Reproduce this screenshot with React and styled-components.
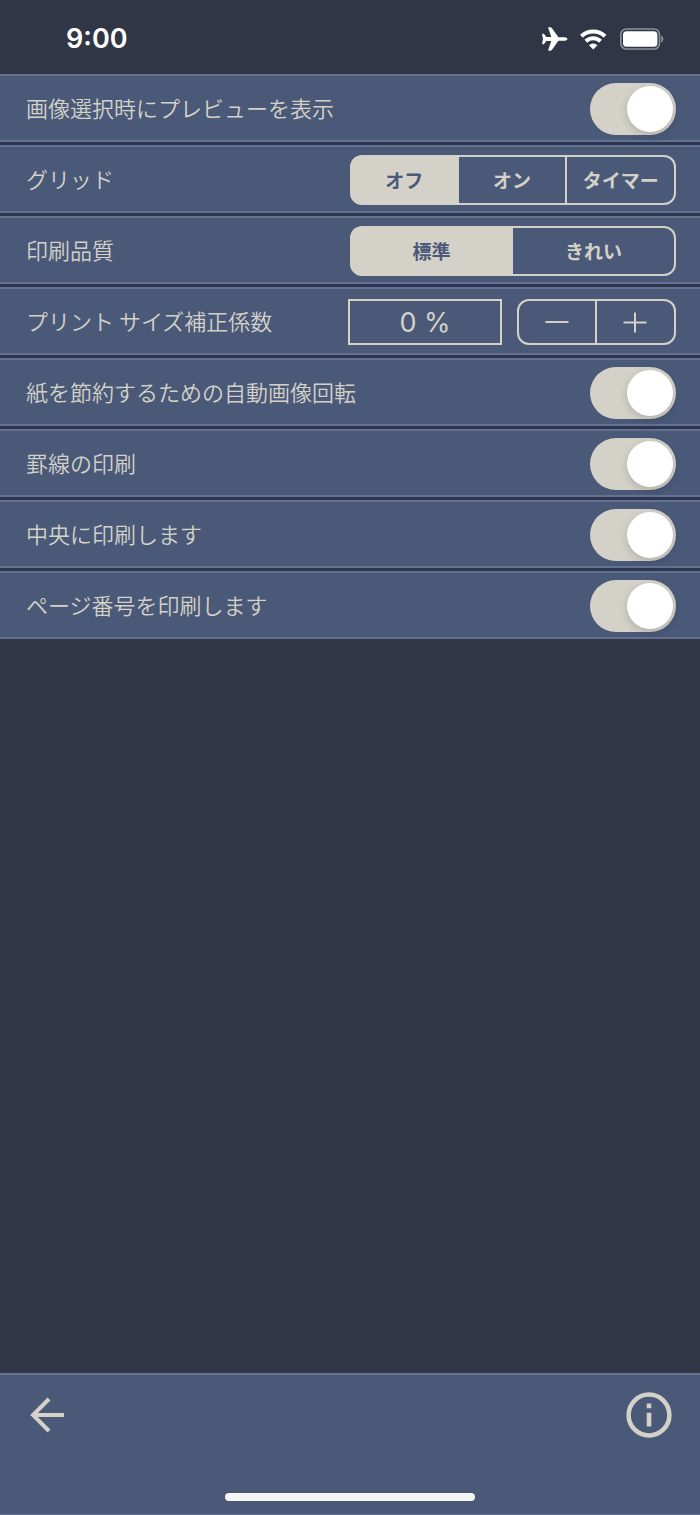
import React, { Component } from "react";
import styled, { createGlobalStyle } from "styled-components";

const NAVY = "#303645";
const PANEL = "#4a5978";
const LINE = "#64718f";
const SAND = "#d3d1c8";

const GlobalStyle = createGlobalStyle`
  * {
    box-sizing: border-box;
  }
  body {
    margin: 0;
    background: ${NAVY};
    color: ${SAND};
    font-family: "Noto Sans CJK JP", sans-serif;
  }
  button,
  input {
    color: inherit;
    font: inherit;
  }
`;

const Screen = styled.div`
  display: flex;
  flex-direction: column;
  min-height: 100vh;
`;

const StatusBar = styled.header`
  align-items: center;
  color: #fff;
  display: flex;
  height: 74px;
  justify-content: space-between;
  padding: 3px 36px 0 66px;
`;

const Clock = styled.time`
  font-family: Inter, sans-serif;
  font-size: 27px;
  font-weight: 600;
  line-height: 32px;
`;

const StatusIcons = styled.div`
  align-items: center;
  display: flex;
  gap: 12px;
`;

const Settings = styled.main`
  background: #2b3450;
  display: grid;
  gap: 3px;
`;

const Row = styled.div`
  align-items: center;
  background: ${PANEL};
  border-bottom: 2px solid ${LINE};
  border-top: 2px solid ${LINE};
  display: flex;
  height: 68px;
  justify-content: space-between;
  padding: 2px 24px 0 26px;
`;

const RowTitle = styled.label`
  font-size: 22px;
  font-weight: 350;
  line-height: 32px;
  padding-bottom: 4px;
`;

const Switch = styled.input`
  appearance: none;
  background: ${SAND};
  border-radius: 26px;
  display: flex;
  flex: none;
  height: 52px;
  justify-content: flex-start;
  margin: 0;
  opacity: ${props => (props.checked ? 1 : 0.6)};
  padding: 3px;
  width: 86px;
  &::before {
    background: #fff;
    border-radius: 50%;
    box-shadow: 0 3px 8px rgba(0, 0, 0, 0.16);
    content: "";
    height: 46px;
    margin-left: ${props => (props.checked ? "34px" : "0")};
    width: 46px;
  }
`;

const Segments = styled.div`
  display: grid;
  flex: none;
  grid-auto-columns: 1fr;
  grid-auto-flow: column;
  height: 50px;
  width: 326px;
`;

const Segment = styled.label`
  align-items: center;
  background: ${props => (props.$active ? SAND : "transparent")};
  border: 2px solid ${SAND};
  color: ${props => (props.$active ? PANEL : SAND)};
  display: flex;
  font-size: 19px;
  font-weight: 700;
  justify-content: center;
  line-height: 28px;
  &:first-child {
    border-radius: 12px 0 0 12px;
  }
  &:last-child {
    border-radius: 0 12px 12px 0;
  }
  & + & {
    border-left: 0;
  }
  &:has(:focus-visible) {
    text-decoration: underline;
  }
`;

const Radio = styled.input`
  appearance: none;
  height: 0;
  margin: 0;
  width: 0;
`;

const Adjust = styled.div`
  display: flex;
  gap: 15px;
`;

const Amount = styled.input`
  background: transparent;
  border: 2px solid ${SAND};
  font-family: Inter, sans-serif;
  font-size: 27px;
  font-weight: 400;
  height: 46px;
  padding: 0;
  text-align: center;
  width: 154px;
`;

const Stepper = styled.div`
  display: grid;
  grid-template-columns: 1fr 1fr;
  height: 46px;
  width: 159px;
`;

const StepButton = styled.button`
  align-items: center;
  background: transparent;
  border: 2px solid ${SAND};
  border-radius: 12px 0 0 12px;
  display: flex;
  justify-content: center;
  padding: 0;
  & + & {
    border-left: 0;
    border-radius: 0 12px 12px 0;
  }
`;

const Footer = styled.footer`
  align-items: center;
  background: ${PANEL};
  border-bottom: 1px solid ${LINE};
  border-top: 2px solid ${LINE};
  display: flex;
  flex-direction: column;
  height: 142px;
  justify-content: space-between;
  margin-top: auto;
  padding: 13px 24px;
`;

const Tools = styled.nav`
  display: flex;
  justify-content: space-between;
  width: 100%;
`;

const ToolButton = styled.button`
  background: transparent;
  border: 0;
  display: flex;
  padding: 0;
`;

const HomeIndicator = styled.div`
  background: #f5f5f5;
  border-radius: 4px;
  height: 8px;
  width: 250px;
`;

const Airplane = () => (
  <svg width="26" height="24" viewBox="0 0 26 24" fill="#fff" aria-hidden="true">
    <path d="M25.500 12c0-1.200-1.900-1.800-3.600-1.800h-5.500L10 1.300C9.500.600 9 .300 8.200.300H6.800c-.500 0-.700.400-.500.900L9.300 10H4.400L2.200 7.200C1.900 6.800 1.600 6.700 1.100 6.700H.600c-.400 0-.600.300-.500.700L1 12 .1 16.600c-.1.400.1.700.5.700h.5c.5 0 .8-.1 1.100-.5L4.400 14h4.900l-3 8.800c-.2.500 0 .9.500.9h1.400c.8 0 1.300-.3 1.800-1l6.400-8.900h5.500c1.700 0 3.600-.6 3.600-1.800z" />
  </svg>
);

const Wifi = () => (
  <svg width="28" height="22" viewBox="0 0 28 22" aria-hidden="true">
    <g fill="none" stroke="#fff" strokeWidth="4">
      <path d="M1.400 8.200a17 17 0 0 1 23.600 0" />
      <path d="M5.900 13.200a10.500 10.500 0 0 1 14.600 0" />
    </g>
    <path d="M13.200 21.500l-4.200-4.200a6 6 0 0 1 8.400 0z" fill="#fff" />
  </svg>
);

const Battery = () => (
  <svg width="44" height="22" viewBox="0 0 44 22" aria-hidden="true">
    <rect x="0.800" y="1" width="38.700" height="20" rx="5.500" fill="none" stroke="#8d919b" strokeWidth="1.600" />
    <rect x="3" y="3.200" width="34.400" height="15.600" rx="3.500" fill="#fff" />
    <path d="M41.200 7.500c2.800 1 2.800 6 0 7z" fill="#8d919b" />
  </svg>
);

const StepIcon = ({ plus }) => (
  <svg width="26" height="26" viewBox="0 0 26 26" stroke={SAND} strokeWidth="2" aria-hidden="true">
    <path d={plus ? "M1.500 13.500h23M13 3.500v20" : "M1.500 13h23"} />
  </svg>
);

const BackIcon = () => (
  <svg width="48" height="54" viewBox="0 0 48 54" fill="none" stroke={SAND} strokeWidth="4" aria-hidden="true">
    <path d="M25 11L9 27l16 16M9 27h31" />
  </svg>
);

const InfoIcon = () => (
  <svg width="54" height="54" viewBox="0 0 54 54" aria-hidden="true">
    <circle cx="27" cy="27" r="20.400" fill="none" stroke={SAND} strokeWidth="4.500" />
    <path d="M24.700 15.500h4.600v4.700h-4.600zM24.700 24.700h4.600v13.800h-4.600z" fill={SAND} />
  </svg>
);

const SegmentRow = ({ name, title, options, value, onChange }) => (
  <Row>
    <RowTitle as="span" id={name}>
      {title}
    </RowTitle>
    <Segments role="radiogroup" aria-labelledby={name}>
      {options.map(option => (
        <Segment key={option} $active={option === value}>
          <Radio
            type="radio"
            name={name}
            checked={option === value}
            onChange={() => onChange(name, option)}
          />
          {option}
        </Segment>
      ))}
    </Segments>
  </Row>
);

const SwitchRow = ({ name, title, checked, onChange }) => (
  <Row>
    <RowTitle htmlFor={name}>{title}</RowTitle>
    <Switch
      id={name}
      type="checkbox"
      role="switch"
      checked={checked}
      onChange={event => onChange(name, event.target.checked)}
    />
  </Row>
);

const printSwitches = [
  { name: "rotate", title: "紙を節約するための自動画像回転" },
  { name: "lines", title: "罫線の印刷" },
  { name: "center", title: "中央に印刷します" },
  { name: "pages", title: "ページ番号を印刷します" }
];

class App extends Component {
  constructor(props) {
    super(props);
    this.state = {
      preview: true,
      grid: "オフ",
      quality: "標準",
      scale: 0,
      rotate: true,
      lines: true,
      center: true,
      pages: true
    };
  }
  setValue = (name, value) => {
    this.setState({ [name]: value });
  };
  step = amount => {
    this.setState(state => ({ scale: state.scale + amount }));
  };
  render() {
    return (
      <Screen>
        <GlobalStyle />
        <StatusBar>
          <Clock>9:00</Clock>
          <StatusIcons>
            <Airplane />
            <Wifi />
            <Battery />
          </StatusIcons>
        </StatusBar>
        <Settings>
          <SwitchRow
            name="preview"
            title="画像選択時にプレビューを表示"
            checked={this.state.preview}
            onChange={this.setValue}
          />
          <SegmentRow
            name="grid"
            title="グリッド"
            options={["オフ", "オン", "タイマー"]}
            value={this.state.grid}
            onChange={this.setValue}
          />
          <SegmentRow
            name="quality"
            title="印刷品質"
            options={["標準", "きれい"]}
            value={this.state.quality}
            onChange={this.setValue}
          />
          <Row>
            <RowTitle htmlFor="scale">プリント サイズ補正係数</RowTitle>
            <Adjust>
              <Amount id="scale" type="text" readOnly value={`${this.state.scale} %`} />
              <Stepper>
                <StepButton type="button" aria-label="減らす" onClick={() => this.step(-1)}>
                  <StepIcon />
                </StepButton>
                <StepButton type="button" aria-label="増やす" onClick={() => this.step(1)}>
                  <StepIcon plus />
                </StepButton>
              </Stepper>
            </Adjust>
          </Row>
          {printSwitches.map(item => (
            <SwitchRow
              key={item.name}
              name={item.name}
              title={item.title}
              checked={this.state[item.name]}
              onChange={this.setValue}
            />
          ))}
        </Settings>
        <Footer>
          <Tools>
            <ToolButton type="button" aria-label="戻る">
              <BackIcon />
            </ToolButton>
            <ToolButton type="button" aria-label="情報">
              <InfoIcon />
            </ToolButton>
          </Tools>
          <HomeIndicator />
        </Footer>
      </Screen>
    );
  }
}

export default App;
